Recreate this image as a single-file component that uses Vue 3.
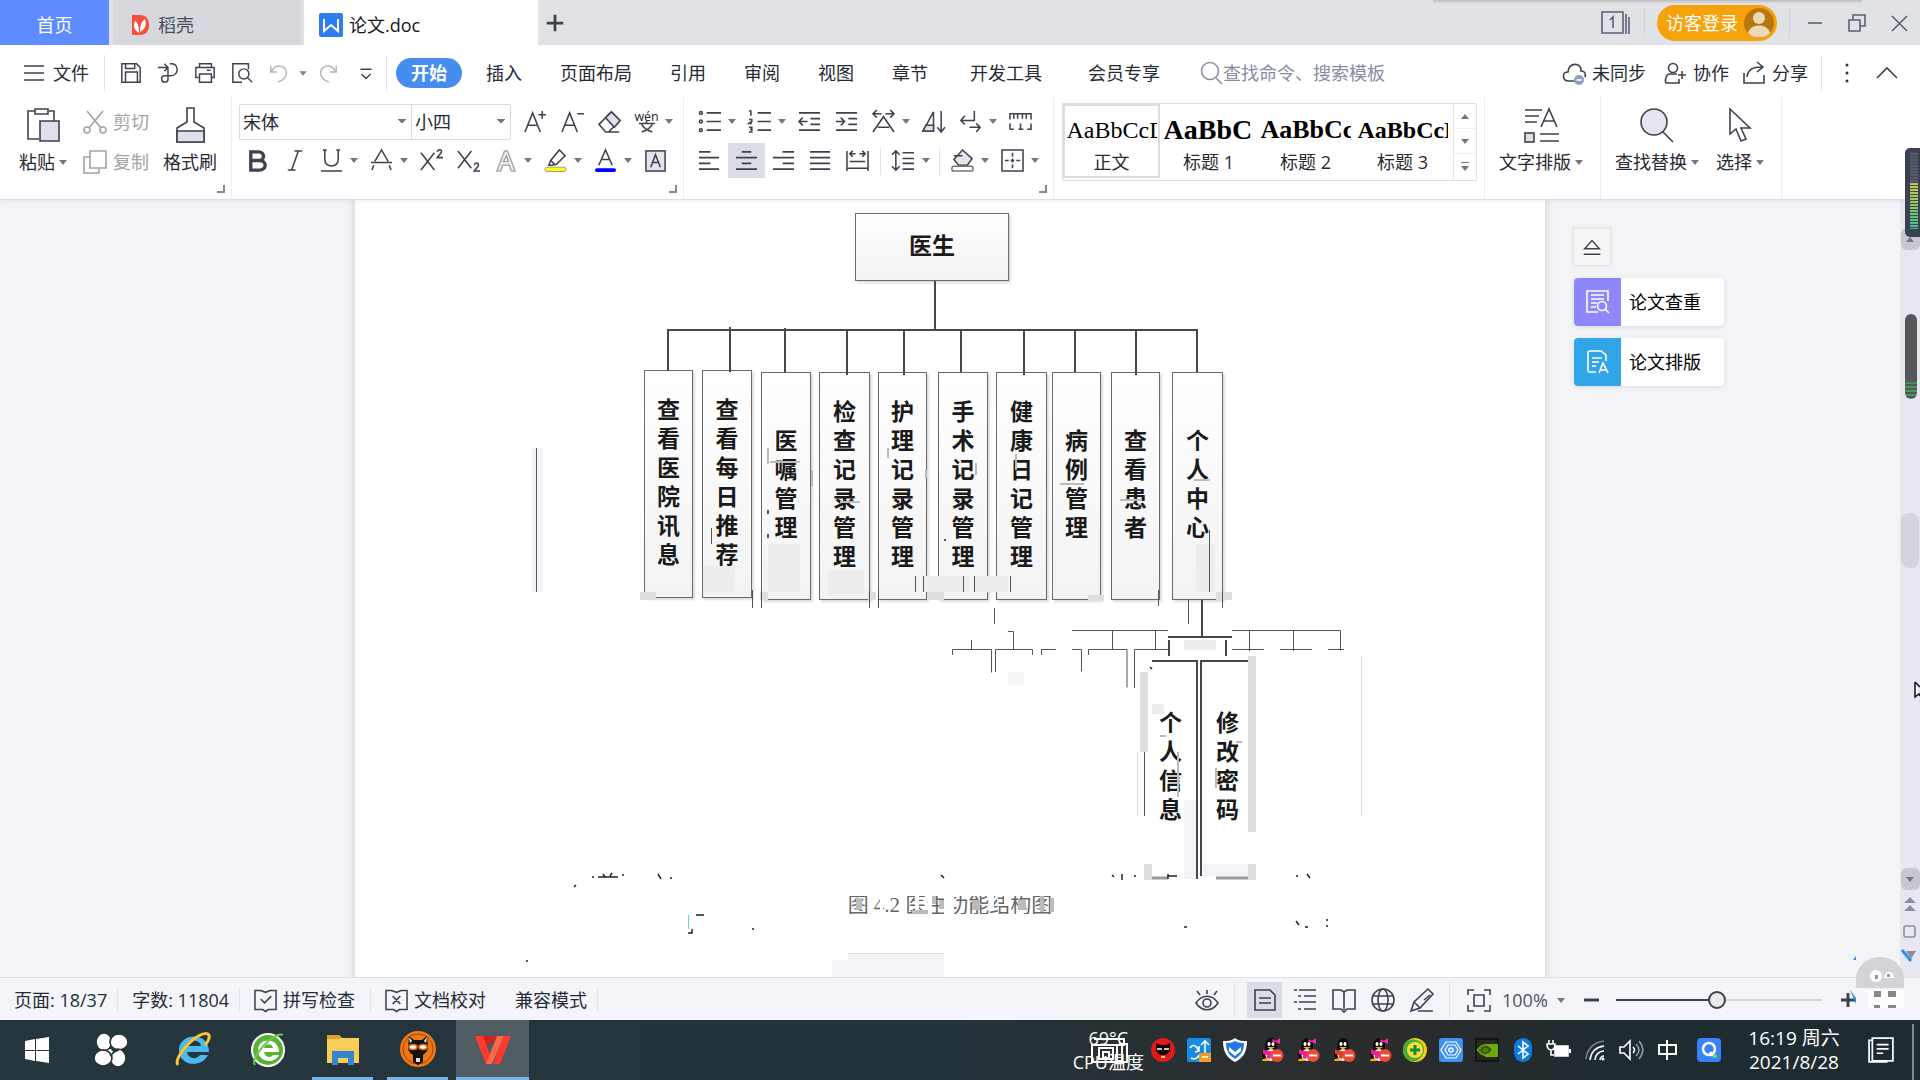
<template>
  <div class="app">
    <header class="titlebar">
      <button class="home-tab">首页</button>
      <button class="doc-tab">
        <Icon name="docer" />
        <span>稻壳</span>
      </button>
      <button class="doc-tab active">
        <Icon name="writer" />
        <span>论文.doc</span>
      </button>
      <button class="new-tab" aria-label="新建"><Icon name="plus" /></button>
      <div class="window-tools">
        <button class="pages" aria-label="标签"><Icon name="pages" box="0 0 30 24" /></button>
        <i class="sep"></i>
        <button class="login">
          <span>访客登录</span>
          <Icon name="avatar" box="0 0 30 30" />
        </button>
        <i class="sep tight"></i>
        <button class="win" aria-label="最小化"><Icon name="min" /></button>
        <button class="win" aria-label="还原"><Icon name="restore" /></button>
        <button class="win" aria-label="关闭"><Icon name="close" /></button>
      </div>
      <div class="top-shadow"></div>
    </header>

    <nav class="menubar">
      <button class="file"><Icon name="menu" />文件</button>
      <i class="sep"></i>
      <div class="quick">
        <button v-for="q in quickTools" :key="q" :aria-label="q" :class="q"><Icon :name="q" /></button>
      </div>
      <i class="sep"></i>
      <button class="tab current">开始</button>
      <button v-for="t in tabs" :key="t" class="tab" :class="{ wide: t.length > 3 && t !== '页面布局' }">{{ t }}</button>
      <label class="search">
        <Icon name="search" />
        <input type="text" aria-label="查找命令、搜索模板" placeholder="查找命令、搜索模板" />
      </label>
      <div class="share">
        <button class="sync"><Icon name="cloud" />未同步</button>
        <button><Icon name="team" />协作</button>
        <button><Icon name="share" />分享</button>
        <i class="sep"></i>
        <button aria-label="更多"><Icon name="dots" /></button>
        <button aria-label="收起"><Icon name="up" /></button>
      </div>
    </nav>

    <section class="ribbon">
      <div class="group clipboard">
        <button class="big"><Icon name="paste" box="0 0 36 36" /><span>粘贴<i class="caret"></i></span></button>
        <div class="stack">
          <button class="muted"><Icon name="cut" />剪切</button>
          <button class="muted"><Icon name="copy" />复制</button>
        </div>
        <button class="big"><Icon name="brush" box="0 0 36 36" /><span>格式刷</span></button>
        <i class="corner"></i>
      </div>

      <div class="group font">
        <div class="row">
          <div class="combo">
            <select aria-label="字体" class="family"><option>宋体</option></select>
            <select aria-label="字号" class="size"><option>小四</option></select>
          </div>
          <button v-for="t in fontTop" :key="t.icon" class="tool" :class="{ drop: t.drop }" :aria-label="t.icon">
            <Icon :name="t.icon" /><i v-if="t.drop" class="caret"></i>
          </button>
        </div>
        <div class="row">
          <button v-for="t in fontBottom" :key="t.icon" class="tool" :class="{ drop: t.drop }" :aria-label="t.icon">
            <Icon :name="t.icon" /><i v-if="t.drop" class="caret"></i>
          </button>
        </div>
        <i class="corner"></i>
      </div>

      <div class="group para">
        <div class="row">
          <button v-for="t in paraTop" :key="t.icon" class="tool" :class="{ drop: t.drop }" :aria-label="t.icon">
            <Icon :name="t.icon" /><i v-if="t.drop" class="caret"></i>
          </button>
        </div>
        <div class="row">
          <template v-for="t in paraBottom" :key="t.icon">
            <i v-if="t.sep" class="sep"></i>
            <button class="tool" :class="{ drop: t.drop, on: t.on }" :aria-label="t.icon">
              <Icon :name="t.icon" /><i v-if="t.drop" class="caret"></i>
            </button>
          </template>
        </div>
        <i class="corner"></i>
      </div>

      <div class="group styles">
        <div class="gallery">
          <button v-for="s in styles" :key="s.name" class="style" :class="s.kind">
            <span class="sample">{{ s.sample }}</span>
            <span>{{ s.name }}</span>
          </button>
          <div class="spin">
            <button aria-label="上一行"><i class="caret flip"></i></button>
            <button aria-label="下一行"><i class="caret"></i></button>
            <button aria-label="展开"><i class="bar"></i><i class="caret"></i></button>
          </div>
        </div>
      </div>

      <div class="group edit">
        <button class="big"><Icon name="typeset" box="0 0 36 36" /><span>文字排版<i class="caret"></i></span></button>
      </div>
      <div class="group edit">
        <button class="big"><Icon name="find" box="0 0 36 36" /><span>查找替换<i class="caret"></i></span></button>
        <button class="big"><Icon name="pick" box="0 0 36 36" /><span>选择<i class="caret"></i></span></button>
      </div>
    </section>

    <main class="workspace">
      <article class="page">
        <div class="canvas">
          <div
            v-for="n in nodes"
            :key="n.text + n.x"
            class="node"
            :class="n.kind"
            :style="{ left: n.x - 355 + 'px', top: n.y - 200 + 'px', width: n.w + 'px', height: n.h + 'px' }"
          >
            <span>{{ n.text }}</span>
          </div>
          <p class="caption">图 4.2 医生功能结构图</p>
          <svg class="lines" viewBox="355 200 1190 777" width="1190" height="777">
            <g fill="#dedede">
              <path d="M1140 672h8v80h-8zM1248 656h8v176h-8zM1144 864h8v16h-8zM1248 864h8v16h-8zM640 592h16v8h-16zM760 592h8v8h-8zM868 592h8v8h-8zM928 592h16v8h-16zM1088 595h16v6h-16zM1216 592h16v8h-16z" />
              <path fill="#ededed" d="M703 566h32v26h-32zM768 544h32v48h-32zM828 570h36v24h-36zM923 576h46v16h-46zM974 576h34v16h-34zM1196 544h19v48h-19zM1152 704h12v10h-12zM1184 640h32v10h-32z" />
              <path fill="#f7f7f7" d="M1008 672h16v14h-16z" />
              <path fill="#f3f4f8" d="M1184 800h14v79h-14zM1203 864h45v12h-45zM532 448h11v144h-11z" />
            </g>
            <path fill="none" stroke="#484848" stroke-width="2" d="M935 281v49M668 371v-41h529v42M730 327v45M785 328v45M847 330v45M904 330v45M961 330v42M1024 330v45M1075 330v42M1136 330v45M1202 600v38M1168 637h64M1152 661h45v218M1248 661h-47v215M1169 640v16M1226 640v16" />
            <path fill="none" stroke="#555" d="M536.500 448v144M752.500 590v18M761.500 590v18M869.500 590v18M878.500 590v18M1158.500 590v16M1222.500 590v18M1209.500 530v62M994.500 608v16M1188.500 600v24M952.500 655v-5.500h39v23M971.500 640v10M995.500 672v-22.500h37v5.500M1008 631.500h5.500v18M1041.500 655v-5.500h14.500M1072 649.500h9.500v22M1088.500 655v-5.500h38.500v38M1134.500 688v-38.500h34M1072 630.500h96M1112.500 630v20M1155.500 630v20M1232 630.500h108.500v20M1249.500 630v21M1293.500 630v21M1232 649.500h32M1280 649.500h32M1328 649.500h16M1144.500 752v64M915.500 576v16M923.500 576v16M963.500 576v16M974.500 576v16M1010.500 576v16M711.500 528v16" />
            <path stroke="#999" stroke-width="3" d="M1152 878h16M1216 878h32" />
            <path stroke="#ddd" d="M1361.500 656v160M1137.500 752v64" />
            <path stroke="#bbb" stroke-width="2" d="M768 448v16M770 462h30M812 470v16M840 502h20M888 448v10M926 470v8M976 463v12M1016 454v16M1060 484h24M1120 500h22M1194 480h16M1160 736h6M1236 742h6M1216 768v20M1178 752v45" />
            <path fill="none" stroke="#222" stroke-width="1.500" d="M574 887l2-2M592 877h2M598 877h20M603 874l2 3M610 876l2-3M622 875h2M658 874l3 5M670 878h2M941 875l3 3M1112 875l2 2M1122 874v6M1134 876h2M1168 874v5M1168 876h9M1296 876h2M1307 874l3 4M688 933h4v-4M696 915h8M752 929h2M526 961h2M1184 927h3M1296 921l3 4M1305 927h3M1327 919v2M1327 925v2M768 534v4M768 510v4M1150 667l2 2M944 540h2" />
            <path stroke="#6bd6bd" d="M688.500 915v14" />
            <path fill="#fff" d="M840 892h220v4h-220zM840 914h220v8h-220zM880 896h3v18h-3zM899 896h8v18h-8zM915 896h4v18h-4zM928 896h4v18h-4zM944 896h10v18h-10zM990 896h4v14h-4zM1004 896h5v10h-5z" />
            <path fill="#bbb" d="M856 898h6v12h-6zM912 910h16v4h-16zM932 896h4v8h-4zM939 900h5v9h-5zM972 900h8v10h-8zM1018 900h8v10h-8zM1040 896h4v16h-4zM1050 898h4v14h-4z" />
            <path fill="#f3f4f8" d="M848 953h96v24h-112v-17h16z" />
            <path stroke="#dfe1e8" d="M848 953.500h96" />
          </svg>
        </div>
      </article>

      <aside class="side">
        <button class="eject" aria-label="收起"><Icon name="eject" /></button>
        <button class="card check"><span class="mark"><Icon name="check" /></span>论文查重</button>
        <button class="card format"><span class="mark"><Icon name="format" /></span>论文排版</button>
      </aside>

      <div class="scrollbar">
        <button class="step" aria-label="向上"><i class="caret flip"></i></button>
        <div class="thumb"></div>
        <button class="step" aria-label="向下"><i class="caret"></i></button>
        <Icon name="prevPage" />
        <Icon name="object" />
        <Icon name="nextPage" />
      </div>

      <div class="meter tall"></div>
      <div class="meter short"></div>
      <svg class="pointer" viewBox="0 0 6 18"><path d="M1 1v15l4-3 1 2M1 1l5 5" fill="#fff" stroke="#111" stroke-width="1.500" /></svg>
    </main>

    <footer class="statusbar">
      <span class="cell">页面: 18/37</span>
      <span class="cell">字数: 11804</span>
      <button class="cell"><Icon name="spell" />拼写检查</button>
      <button class="cell plain"><Icon name="proof" />文档校对</button>
      <span class="cell">兼容模式</span>
      <div class="views">
        <button aria-label="护眼"><Icon name="eye" /></button>
        <i class="sep"></i>
        <button v-for="v in views" :key="v" :class="{ on: v === 'pageView' }" :aria-label="v"><Icon :name="v" /></button>
        <i class="sep"></i>
        <button class="fit" aria-label="适合页面"><Icon name="fit" /></button>
        <label class="zoom">
          <select aria-label="显示比例"><option>100%</option></select>
          <i class="caret"></i>
        </label>
        <button class="minus" aria-label="缩小"><Icon name="minus" /></button>
        <input v-model="zoom" class="slider" type="range" min="0" max="100" aria-label="缩放" />
        <button class="more" aria-label="放大"><Icon name="more" /></button>
      </div>
      <svg class="mascot" viewBox="0 0 54 54">
        <path d="M6 32v-8a24 22 0 0 1 48-2v10z" fill="#d3d4d9" />
        <path d="M6 34h48v18H18V36z" fill="#fff" opacity=".8" />
        <path d="M6 0v4L3 4zM0 34l6 14v-6z" fill="#3d86d8" />
        <g fill="#fff"><circle cx="26" cy="20" r="6" /><path d="M34 22a5 6 0 0 1 10 0z" /></g>
        <path d="M25 19h3v4h-3zM37 18h3v3h-3z" fill="#999" />
        <path d="M24 35h7v6h-7zM38 35h8v6h-8zM24 49h6v3h-6zM38 49h8v3h-8z" fill="#888" />
      </svg>
    </footer>

    <div class="taskbar">
      <button class="start" aria-label="开始"><Icon name="windows" box="0 0 36 36" /></button>
      <button class="start" aria-label="clover"><Icon name="clover" box="0 0 36 36" /></button>
      <div class="apps">
        <button v-for="a in apps" :key="a.icon" :class="{ running: a.running, focus: a.focus }" :aria-label="a.icon">
          <Icon :name="a.icon" box="0 0 36 36" />
        </button>
      </div>
      <div class="tray">
        <div class="temp">
          <span>69°C</span>
          <span>CPU温度</span>
          <svg class="ghost" viewBox="0 0 38 26" fill="none" stroke="#fff" stroke-width="2">
            <path d="M3 1h30v6H1v17h24M8 10h14v11H8zM12 14h6v6h-6zM26 8v16h10V6h-8M31 6v18" />
          </svg>
        </div>
        <Icon v-for="(t, i) in tray" :key="i" :name="t" />
        <div class="clock"><span>16:19 周六</span><span>2021/8/28</span></div>
        <button class="notify" aria-label="通知"><Icon name="notice" /></button>
        <i class="desktop"></i>
      </div>
    </div>
  </div>
</template>

<script setup>
import { h, ref } from "vue";

const zoom = ref(49);

const penguin = (bow) =>
  `<g stroke="none"><path d="M4 19c-2-2 0-6 2-8C6 4 8 0 12 0s6 4 6 11c2 2 4 6 2 8l-3 4H7z" fill="#0b0b0d"/><ellipse cx="12" cy="17" rx="5.500" ry="6" fill="#fff"/><path d="M4 11c5 3 11 3 16 0l1 4c-3 2-6 3-9 3l-1 3-3-1v-3l-4-1z" fill="${bow ? "#f019a0" : "#e23a2e"}"/><ellipse cx="10" cy="6" rx="1.500" ry="2" fill="#fff"/><ellipse cx="14" cy="6" rx="1.500" ry="2" fill="#fff"/><path d="M8 9h8l-4 2.500zM3 23c0-2 3-3 6-2l1 2z" fill="#ffb000"/>${bow ? '<path d="M13 1l4 2 4-3v6l-4-2-3 1z" fill="#ff2aa8"/>' : ""}<circle cx="18" cy="17.500" r="6.500" fill="#ee4a38"/><path d="M14 16.500h8v2h-8z" fill="#fff"/></g>`;

const icons = {
  docer: '<g stroke="none"><path d="M4 2h8c6 0 9 4 9 10s-3 10-9 10H4z" fill="#f5513e"/><path d="M11 20c-5-3-6-7-4-12 3 2 4 5 4 12zM12 19c0-6 1-10 5-13 2 6 0 10-5 13z" fill="#fff"/></g>',
  writer: '<rect width="24" height="24" rx="2" fill="#2f7cf0" stroke="none"/><path d="M5 6v12l7-6 7 6V6" stroke="#fff" stroke-width="2"/>',
  plus: '<path d="M12 3v18M3 12h18" stroke-width="3"/>',
  pages: '<path d="M1 1h21v21H1zM25 3v20M28 6v17"/><path d="M9 9l3-3v11"/>',
  avatar: '<circle cx="15" cy="15" r="15" fill="#b9770f" stroke="none"/><circle cx="15" cy="10" r="6" fill="#ecd9b5" stroke="none"/><path d="M4 25c2-10 20-10 22 0-5 6-17 6-22 0z" fill="#ecd9b5" stroke="none"/>',
  min: '<path d="M5 12h14"/>',
  restore: '<path d="M4 9h11v11H4zM8 9V4h12v11h-5"/>',
  close: '<path d="M5 5l15 15M20 5L5 20"/>',
  menu: '<path d="M2 5h20M2 12h20M2 19h20"/>',
  save: '<path d="M2 2h16l4 4v16H2zM6 22V11h13v11M6 2v5h10V2"/>',
  exportTo: '<path d="M1 6h10M8 2l4 4-4 4M14 2c10-2 11 13 1 13h-3v3a3.500 3.500 0 1 1-4-3h4V7"/>',
  print: '<path d="M6 6V2h13v4M5 17H2V6h20v11h-3M6 13h13v9H6zM14 9h4"/>',
  preview: '<path d="M12 22H2V2h17v6"/><circle cx="14" cy="13" r="5.500"/><path d="M18 17l5 5"/>',
  undo: '<g stroke="#b5b7bd"><path d="M3 4v7h7M4 10c5-9 16-6 16 2 0 5-4 8-9 10"/></g>',
  undoMore: '<path d="M8 10h8l-4 5z" fill="#888" stroke="none"/>',
  redo: '<g stroke="#b5b7bd"><path d="M21 4v7h-7M20 10C15 1 4 4 4 12c0 5 4 8 9 10"/></g>',
  chevron: '<path d="M6 8h12M7 13l5 5 5-5"/>',
  search: '<g stroke="#8b90a3"><circle cx="11" cy="10" r="8.500"/><path d="M17 17l6 6"/></g>',
  cloud: '<path d="M13 20H6C0 19 0 11 6 11 6 1 20 1 19 10c4 0 5 3 4 6"/><circle cx="17" cy="19" r="5" fill="#8fa0bd" stroke="none"/><path d="M14.500 19h5" stroke="#fff"/>',
  team: '<circle cx="10" cy="7" r="4.500"/><path d="M14 13H7c-5 0-5 9-4 9h13v-4M19 10v8M15 14h8"/>',
  share: '<path d="M2 12v10h20v-8M5 16c1-8 6-10 15-10M15 1l6 5-6 5"/>',
  dots: '<g fill="#333" stroke="none"><circle cx="12" cy="4" r="1.500"/><circle cx="12" cy="12" r="1.500"/><circle cx="12" cy="20" r="1.500"/></g>',
  up: '<path d="M2 17L12 7l10 10"/>',
  paste: '<path d="M10 4H3v28h11M24 4h5v10M10 2h13v5H10z"/><path d="M15 14h19v20H15z" fill="#dfe0e9"/>',
  cut: '<g stroke="#a3a3a3"><path d="M4 1l14 17M20 1L6 18"/><circle cx="4" cy="20" r="3"/><circle cx="20" cy="20" r="3"/></g>',
  copy: '<g stroke="#a3a3a3"><path d="M7 7H1v16h15v-5M7 1h16v17H7z"/></g>',
  brush: '<path d="M15 15V1h7v14l10 6v14H5V21z"/><path d="M5 24h27v11H5z" fill="#dfe0e9"/>',
  grow: '<path d="M1 23L9 3l8 20M4 16h10M19 1v8M15 5h8"/>',
  shrink: '<path d="M1 23L9 3l8 20M4 16h10M17 4h7"/>',
  eraser: '<path d="M1 15L14 2l9 9-12 12H8zM8 23h14"/><path d="M8 8l6-6 9 9-6 7z" fill="#dfe0e9"/>',
  wen: '<text x="12" y="11" text-anchor="middle" font-size="13" stroke="none" fill="#222" font-family="Open Sans">wén</text><path d="M4 14h17M12 11v3M7 15c2 4 5 6 11 8M18 15c-2 4-5 6-11 8"/>',
  bold: '<path d="M5 3h8c7 0 7 9 0 9H5zM5 12h9c8 0 8 10 0 10H5z" stroke-width="3.500"/>',
  italic: '<path d="M12 2h8M5 22h8M16 2L9 22"/>',
  underline: '<path d="M3 1h4M17 1h4M5 1v10c0 9 14 9 14 0V1M1 23h22"/>',
  strike: '<path d="M5 13l7-12 7 12M1 14h22M4 17l-2 5M20 17l2 5"/>',
  sup: '<path d="M1 4l14 18M15 4L1 22M18 3c1-4 6-2 4 1l-4 5h6"/>',
  sub: '<path d="M1 2l14 18M15 2L1 20M18 17c1-4 6-2 4 1l-4 5h6"/>',
  outlineA: '<path d="M3 23L11 2h3l8 21h-4l-2-6H9l-2 6zM10 13h5l-2-6z" stroke="#aaa" fill="#f0f0f3"/>',
  marker: '<path d="M5 17l2-5 9-11 6 6-9 9-5 1zM7 12l5 5"/><rect x="1" y="19" width="22" height="4.500" rx="2" fill="#ff0" stroke="#999" stroke-width="1"/>',
  fontColor: '<path d="M5 17l7-16 7 16M8 11h8"/><rect x="1" y="20" width="22" height="4" rx="2" fill="#00f" stroke="none"/>',
  boxedA: '<rect x="2" y="2" width="20" height="21" fill="#e4e5ec"/><path d="M7 19l5-13 5 13M9 14h6"/>',
  bullets: '<circle cx="3" cy="3" r="1.500"/><circle cx="3" cy="12" r="1.500"/><circle cx="3" cy="21" r="1.500"/><path d="M9 3h15M9 12h15M9 21h15"/>',
  numbers: '<path d="M1 1h2v5M1 10h3v2l-3 2h3M1 18h3v5H1M2 20h2M10 3h14M10 12h14M10 21h14"/>',
  outdent: '<path d="M1 3h22M13 9h10M13 15h10M1 21h22M1 12h9M5 8l-4 4 4 4"/>',
  indent: '<path d="M1 3h22M14 9h9M14 15h9M1 21h22M1 12h8M6 8l4 4-4 4"/>',
  scaleA: '<path d="M1 4h9M5 0L1 4l4 4M23 4h-9M19 0l4 4-4 4M1 23L12 7l11 16M6 18h12"/>',
  sort: '<path d="M1 22L12 2v20z"/><path d="M4 16h8v6H1z" fill="#dfe0e9"/><path d="M20 1v21M16 18l4 5 4-5"/>',
  wrap: '<path d="M16 1v10H2M6 6l-4 5 4 4M11 18h11M18 14l4 4-4 5"/>',
  ruler: '<path d="M1 10V4h22v6M5 4v5M9 4v5M14 4v5M18 4v5M1 14v6M1 20h4M10 20h5M12 14v6M19 20h4v-6"/>',
  left: '<path d="M1 3h12M1 9h21M1 15h12M1 21h21"/>',
  center: '<path d="M7 3h10M1 9h22M7 15h10M1 21h22"/>',
  right: '<path d="M11 3h12M1 9h22M11 15h12M1 21h22"/>',
  justify: '<path d="M1 3h21M1 9h21M1 15h21M1 21h21"/>',
  spread: '<path d="M1 2v21M23 2v21M5 5h5M7 2L4 5l3 3M19 5h-5M17 2l3 3-3 3M4 13h16M1 20h22"/>',
  spacing: '<path d="M4 2v20M0 6l4-4 4 4M0 18l4 4 4-4M11 4h12M11 10h12M11 15h12M11 21h12"/>',
  fill: '<path d="M3 11L12 1l10 9-5 7H8zM3 7h9" fill="#e4e5ec"/><rect x="1" y="18" width="22" height="5" rx="2" fill="#fff" stroke="#777"/>',
  border: '<path d="M1 1h22v22H1z"/><path d="M12 4v16M4 12h16" stroke-dasharray="4 2"/>',
  typeset: '<path d="M2 3h17M2 9h14M2 15h12M18 20l8-18 8 18M21 14h10M17 27h19M17 34h19"/><rect x="2" y="26" width="9" height="9" fill="#dfe0e9"/>',
  find: '<circle cx="15" cy="15" r="13" fill="#e6e7ee"/><path d="M24 25l10 10"/>',
  pick: '<path d="M8 2v25l6-5 5 12 5-2-5-11h9z"/>',
  eject: '<path d="M4 14L12 5l8 9zM3 20h18"/>',
  check: '<path d="M12 22H1V1h21v10M5 5h13M5 9h13M5 13h6M5 17h5"/><circle cx="16" cy="16" r="4.500"/><path d="M19 19l4 4"/>',
  format: '<path d="M10 22H4c-2 0-2-1-2-3V3c0-1 0-2 2-2h11l5 4v6M6 8h10M6 12h7M6 16h4M13 23l4-10 5 10M15 20h5"/>',
  prevPage: '<path d="M6 10l6-6 6 6zM6 18l6-6 6 6z" fill="#8d8e9d" stroke="none"/>',
  object: '<rect x="6" y="6" width="11" height="11" rx="2" stroke="#8d8e9d"/>',
  nextPage: '<path d="M8 4h10l-5 8z" fill="#8d8e9d" stroke="none"/><path d="M4 3l9 11" stroke="#2d8ff0" stroke-width="3"/>',
  spell: '<path d="M9 22H1V2h6l5 2 5-2h6v20h-8l-3 2zM7 11l4 4 7-7"/>',
  proof: '<path d="M9 22H1V2h6l5 2 5-2h6v20h-8l-3 2zM8 8l8 8M16 8l-8 8"/>',
  eye: '<path d="M1 15c6-9 16-9 22 0-6 9-16 9-22 0z"/><circle cx="12" cy="15" r="4"/><path d="M12 2v4M2 3l3 4M22 3l-3 4"/>',
  pageView: '<path d="M2 2h15l5 5v15H2zM6 10h12M6 15h12"/>',
  outline: '<path d="M1 2h3M6 2h17M5 8h3M11 8h12M1 14h3M6 14h17M5 21h3M11 21h12"/>',
  reading: '<path d="M1 2h8l3 2 3-2h8v19h-8l-3 3-3-3H1zM12 4v18"/>',
  web: '<circle cx="12" cy="12" r="11"/><ellipse cx="12" cy="12" rx="5" ry="11"/><path d="M2 8h20M2 16h20"/>',
  pen: '<path d="M1 23l3-9L18 1l5 5-13 14zM4 14l6 6M8 23h15M14 12l6-5"/>',
  fit: '<path d="M1 7V2h6M17 2h6v5M23 17v6h-6M7 23H1v-6M7 7h10v11H7z"/>',
  minus: '<path d="M5 12h15" stroke-width="3"/>',
  more: '<path d="M5 12h14M12 5v14" stroke-width="3"/>',
  windows: '<path d="M6 9l10-2v11H6zM17 7l13-2v13H17zM6 19h10v10L6 27zM17 19h13v12l-13-2z" fill="#fff" stroke="none"/>',
  clover: '<g fill="#fff" stroke="#24343c"><ellipse cx="11" cy="10" rx="8" ry="9"/><ellipse cx="26" cy="10" rx="9" ry="8"/><ellipse cx="25" cy="26" rx="8" ry="9"/><ellipse cx="10" cy="26" rx="9" ry="8"/><path d="M10 18c4 1 6 0 8-4 0 4 2 6 8 4-4 1-7 2-8 6-1-5-4-6-8-6z"/></g>',
  ie: '<path d="M34 21H12c1 7 10 8 13 3h8C26 38 3 35 4 18 5 2 34 0 34 21zM26 15c-1-7-13-7-14 0z" fill="#4bb9ee" stroke="none"/><path d="M3 34C-3 27 24-2 33 3c3 2 0 8-3 11" stroke="#f6c62d" stroke-width="3"/>',
  browser: '<circle cx="18" cy="19" r="16" fill="#54b431" stroke="#fff" stroke-width="2"/><path d="M29 21H14c1 6 7 6 9 3h6c-5 10-21 7-21-5 0-13 21-13 21 2zm-6-4c-1-5-8-5-9 0z" fill="#fff" stroke="none"/><path d="M5 34C-1 27 25-1 33 4" stroke="#6cc94a" stroke-width="2"/>',
  folder: '<path d="M2 4h12l3 3h17v25H2z" fill="#f8cd57" stroke="none"/><path d="M2 4h12l2 4H2z" fill="#dca12d" stroke="none"/><path d="M7 34V20h22v14h-6v-7H13v7z" fill="#3288cf" stroke="none"/>',
  catApp: '<circle cx="18" cy="18" r="18" fill="#f07812" stroke="none"/><circle cx="18" cy="18" r="15" stroke="#a83d0d" stroke-width="1"/><path d="M9 5l5 4h8l5-4 1 12c-1 4-4 6-5 7v7l-5 3-5-3v-7c-2-1-5-4-5-7z" fill="#161210" stroke="none"/><path d="M9 6l3 4-2 2zM27 6l-3 4 2 2z" fill="#fff" stroke="none"/><ellipse cx="13" cy="16" rx="4" ry="2.500" fill="#fff" stroke="#e36b18"/><ellipse cx="23" cy="16" rx="4" ry="2.500" fill="#fff" stroke="#e36b18"/><path d="M16 27h4v4h-4z" fill="#ddd" stroke="none"/>',
  wps: '<path d="M0 5h8l6 16 3 12h-6z" fill="#ff3b30" stroke="none"/><path d="M8 5h13l-3 7h-6l2 9z" fill="#d91f1f" stroke="none"/><path d="M11 33L22 5h7L17 33z" fill="#ff6a45" stroke="none"/><path d="M19 33h6L36 5h-7l-8 20z" fill="#ff3b30" stroke="none"/>',
  catTray: '<circle cx="12" cy="12" r="12" fill="#e01919" stroke="none"/><path d="M5 5l5 2h5l4-2v8l-4 4h-6l-4-4z" fill="#160808" stroke="none"/><path d="M6 11h5M13 11h5" stroke="#fff"/><path d="M10 19h4" stroke="#ddd"/>',
  syncTray: '<rect width="24" height="24" rx="2" fill="#168be5" stroke="none"/><path d="M3 10c4-6 8 0 8 3M8 14l4-1V8M18 3v12M14 7l4-4 4 4M4 20c4 2 7 0 8-3" stroke="#fff"/><path d="M12 15h12v9H12z" fill="#f39b22" stroke="none"/><path d="M15 19h6" stroke="#fff"/>',
  shield: '<path d="M12 0c4 3 7 3 12 3 0 11-4 17-12 21C4 20 0 14 0 3c5 0 8 0 12-3z" fill="#fff" stroke="none"/><path d="M12 3c4 2 6 2 9 2 0 8-3 12-9 16C6 17 3 13 3 5c3 0 5 0 9-2z" fill="#2478dd" stroke="none"/><path d="M6 9l6 5 6-5v4l-6 5-6-5z" fill="#fff" stroke="none"/>',
  qqPink: penguin(true),
  qqRed: penguin(false),
  safe: '<circle cx="12" cy="12" r="12" fill="#f4cc1a" stroke="none"/><path d="M3 4c8-6 18 0 18 7 0 6-4 10-8 12C-1 24-3 10 3 4z" fill="#45ad35" stroke="none"/><circle cx="12" cy="12" r="8" fill="#f9dc37" stroke="none"/><path d="M12 7v10M7 12h10" stroke="#138b35" stroke-width="3"/>',
  hexTray: '<rect width="24" height="24" rx="3" fill="#3f91f3" stroke="none"/><path d="M7 4h10l5 8-5 8H7l-5-8zM9 7h7l3 5-3 5H9l-3-5z" stroke="#fff" stroke-width="1.200"/><circle cx="12" cy="12" r="2" stroke="#fff"/>',
  nvidia: '<rect x="1" y="1" width="22" height="22" fill="#26291f" stroke="#111"/><path d="M10 6h13v13H10z" fill="#70a90b" stroke="none"/><path d="M2 12c5-7 12-7 16 0-5 7-11 7-16 0z" fill="#4f7d0c" stroke="#83b71e" stroke-width="1"/><path d="M6 12c3-4 7-4 9 0-3 4-6 4-9 0z" stroke="#26380c" stroke-width="1"/>',
  bluetooth: '<rect x="3" width="18" height="24" rx="9" fill="#0e79df" stroke="none"/><path d="M7 8l10 8-5 4V4l5 4-10 8" stroke="#fff"/>',
  battery: '<path d="M2 2v4M6 2v4M0 6h8c0 4-2 6-4 6s-4-2-4-6zM4 12v5h3" stroke="#fff"/><path d="M8 8h13v10H8z" fill="#fff" stroke="#fff"/><path d="M23 11v4" stroke="#fff" stroke-width="2"/>',
  wifi: '<path d="M3 21C4 11 11 4 21 3" stroke="#78848a"/><path d="M7 22c1-8 6-13 14-14M12 22c0-5 4-9 9-9M17 22c0-2 2-4 4-4" stroke="#fff"/><circle cx="20" cy="21" r="1.500" fill="#fff" stroke="none"/>',
  volume: '<path d="M1 9h4l6-6v18l-6-6H1zM14 9c2 2 2 4 0 6" stroke="#fff"/><path d="M17 6c4 4 4 8 0 12M20 3c5 6 5 12 0 18" stroke="#8e999e"/>',
  ime: '<path d="M4 7h17v9H4zM12 2v20" stroke="#fff" stroke-width="2"/>',
  qTray: '<rect width="24" height="24" rx="4" fill="#3b82f8" stroke="none"/><circle cx="12" cy="11" r="6" stroke="#fff" stroke-width="2.500"/><path d="M13 14l3 4" stroke="#fff" stroke-width="2.500"/><circle cx="18" cy="18" r="2" fill="#68e063" stroke="none"/>',
  notice: '<path d="M4 1h19v21H4zM4 3H1v20h17M8 7h11M8 11h11M8 15h6" stroke="#fff"/>',
};

const Icon = (props) =>
  h("svg", { class: "icon", viewBox: props.box || "0 0 24 24", "aria-hidden": "true", innerHTML: icons[props.name] });
Icon.props = ["name", "box"];

const quickTools = ["save", "exportTo", "print", "preview", "undo", "undoMore", "redo", "chevron"];
const tabs = ["插入", "页面布局", "引用", "审阅", "视图", "章节", "开发工具", "会员专享"];

const fontTop = [{ icon: "grow" }, { icon: "shrink" }, { icon: "eraser" }, { icon: "wen", drop: true }];
const fontBottom = [
  { icon: "bold" },
  { icon: "italic" },
  { icon: "underline", drop: true },
  { icon: "strike", drop: true },
  { icon: "sup" },
  { icon: "sub" },
  { icon: "outlineA", drop: true },
  { icon: "marker", drop: true },
  { icon: "fontColor", drop: true },
  { icon: "boxedA" },
];
const paraTop = [
  { icon: "bullets", drop: true },
  { icon: "numbers", drop: true },
  { icon: "outdent" },
  { icon: "indent" },
  { icon: "scaleA", drop: true },
  { icon: "sort" },
  { icon: "wrap", drop: true },
  { icon: "ruler" },
];
const paraBottom = [
  { icon: "left" },
  { icon: "center", on: true },
  { icon: "right" },
  { icon: "justify" },
  { icon: "spread" },
  { icon: "spacing", drop: true, sep: true },
  { icon: "fill", drop: true, sep: true },
  { icon: "border", drop: true },
];

const styles = [
  { name: "正文", sample: "AaBbCcD", kind: "body" },
  { name: "标题 1", sample: "AaBbC", kind: "h1" },
  { name: "标题 2", sample: "AaBbCc", kind: "h2" },
  { name: "标题 3", sample: "AaBbCcD", kind: "h3" },
];

const nodes = [
  { text: "医生", x: 855, y: 213, w: 154, h: 68, kind: "root" },
  { text: "查看医院讯息", x: 644, y: 370, w: 49, h: 228 },
  { text: "查看每日推荐", x: 702, y: 370, w: 50, h: 228 },
  { text: "医嘱管理", x: 761, y: 372, w: 50, h: 228 },
  { text: "检查记录管理", x: 819, y: 372, w: 51, h: 228 },
  { text: "护理记录管理", x: 878, y: 372, w: 49, h: 228 },
  { text: "手术记录管理", x: 938, y: 372, w: 50, h: 228 },
  { text: "健康日记管理", x: 996, y: 372, w: 51, h: 228 },
  { text: "病例管理", x: 1052, y: 372, w: 49, h: 228 },
  { text: "查看患者", x: 1111, y: 372, w: 49, h: 228 },
  { text: "个人中心", x: 1172, y: 372, w: 51, h: 228 },
  { text: "个人信息", x: 1146, y: 661, w: 49, h: 214, kind: "bare" },
  { text: "修改密码", x: 1203, y: 661, w: 49, h: 214, kind: "bare" },
];

const views = ["pageView", "outline", "reading", "web", "pen"];
const apps = [
  { icon: "ie" },
  { icon: "browser" },
  { icon: "folder", running: true },
  { icon: "catApp", running: true },
  { icon: "wps", running: true, focus: true },
];
const tray = [
  "catTray", "syncTray", "shield", "qqPink", "qqPink", "qqRed", "qqPink", "safe",
  "hexTray", "nvidia", "bluetooth", "battery", "wifi", "volume", "ime", "qTray",
];
</script>

<style>
body {
  margin: 0;
}
</style>

<style scoped>
.app {
  display: flex;
  flex-direction: column;
  height: 100vh;
  overflow: hidden;
  font: 18px/24px "Open Sans", "Noto Sans CJK SC", sans-serif;
  color: #262a33;
  background: #fff;
}

button,
select,
input {
  font: inherit;
  color: inherit;
  border: 0;
  padding: 0;
  margin: 0;
  background: none;
  appearance: none;
  outline: 0;
}

button {
  display: flex;
  align-items: center;
  justify-content: center;
  white-space: nowrap;
}

.icon {
  width: 24px;
  height: 24px;
  flex: none;
  overflow: visible;
  fill: none;
  stroke: #3d424d;
  stroke-width: 1.6;
}

.sep {
  width: 1px;
  height: 36px;
  background: #e3e4e9;
}

.caret {
  display: inline-block;
  border: 4px solid transparent;
  border-top: 5px solid #777;
  border-bottom: 0;
}

.caret.flip {
  transform: rotate(180deg);
}

/* title bar */
.titlebar {
  position: relative;
  display: flex;
  height: 45px;
  flex: none;
  background: #e1e2e6;
}

.home-tab {
  width: 109px;
  margin-right: 4px;
  padding-top: 4px;
  background: #5e8bff;
  color: #fff;
}

.doc-tab {
  width: 188px;
  margin-right: 3px;
  padding: 4px 0 0 15px;
  gap: 6px;
  justify-content: flex-start;
  background: #d7d8dd;
  color: #4a4f5c;
}

.doc-tab.active {
  width: 234px;
  margin: 0;
  background: #fff;
  color: #15171c;
}

.new-tab {
  width: 34px;
}

.new-tab .icon {
  width: 22px;
}

.window-tools {
  display: flex;
  align-items: center;
  margin-left: auto;
}

.window-tools .icon {
  stroke: #5a6078;
}

.window-tools .sep {
  height: 30px;
  margin: 0 12px 0 13px;
  background: #d2d4dc;
}

.window-tools .tight {
  margin: 0 4px 0 12px;
}

.window-tools .pages .icon {
  width: 30px;
}

.login {
  height: 36px;
  padding: 0 3px 0 9px;
  gap: 6px;
  border-radius: 18px;
  background: #f6a30b;
  color: #fff;
}

.login .icon {
  width: 30px;
  height: 30px;
}

.win {
  width: 42px;
}

.top-shadow {
  position: absolute;
  top: 0;
  right: 58px;
  width: 429px;
  height: 3px;
  background: linear-gradient(#b9babd, #dcdde1);
}

/* menu */
.menubar {
  display: flex;
  align-items: center;
  height: 52px;
  flex: none;
  padding: 4px 21px 0 22px;
  box-sizing: border-box;
  white-space: nowrap;
}

.file {
  gap: 7px;
  padding-right: 15px;
}

.quick {
  display: flex;
  align-items: center;
  padding-left: 7px;
}

.quick button {
  width: 37px;
}

.quick .undoMore {
  width: 12px;
}

.quick .chevron {
  width: 40px;
}

.quick .icon {
  width: 22px;
  height: 22px;
}

.tab {
  padding: 0 19px;
}

.tab.wide {
  padding: 0 23px;
}

.tab.current {
  height: 30px;
  margin: 0 5px 0 9px;
  padding: 0 15px;
  border-radius: 15px;
  background: #478df0;
  color: #fff;
  font-weight: 700;
}

.search {
  display: flex;
  align-items: center;
  margin-left: 16px;
}

.search input {
  width: 180px;
}

.search input::placeholder {
  color: #868ca2;
  opacity: 1;
}

.share {
  display: flex;
  align-items: center;
  margin-left: auto;
  gap: 13px;
}

.share button {
  gap: 6px;
}

.share .sync {
  margin-right: 4px;
}

.share button + .sep + button {
  margin-right: 3px;
}

/* ribbon */
.ribbon {
  position: relative;
  z-index: 1;
  display: flex;
  height: 103px;
  flex: none;
  box-sizing: border-box;
  border-bottom: 1px solid #dedfe3;
  box-shadow: 0 2px 4px #0000000d;
}

.group {
  position: relative;
  padding: 5px 7px 0 7px;
  border-right: 1px solid #ebecf0;
}

.clipboard {
  display: flex;
  padding: 5px 14px 0 19px;
}

.font {
  padding-right: 5px;
}

.para {
  padding-right: 9px;
}

.big {
  flex-direction: column;
  justify-content: flex-start;
  padding-top: 5px;
}

.big .icon {
  width: 36px;
  height: 36px;
}

.big span {
  display: flex;
  align-items: center;
  gap: 4px;
  height: 24px;
  margin-top: 7px;
}

.stack {
  display: flex;
  flex-direction: column;
  padding: 0 14px 0 16px;
}

.stack button {
  height: 40px;
  gap: 6px;
  color: #a3a3a3;
}

.corner {
  position: absolute;
  right: 6px;
  bottom: 6px;
  width: 6px;
  height: 6px;
  border: solid #888;
  border-width: 0 2px 2px 0;
}

.row {
  display: flex;
  align-items: center;
  height: 39px;
}

.row .sep {
  margin: 0 4px;
  height: 28px;
}

.combo {
  display: flex;
  width: 270px;
  height: 34px;
  margin-right: 6px;
  border: 1px solid #d9dbe1;
  border-radius: 2px;
}

.combo select {
  padding-left: 3px;
  background: conic-gradient(from -39deg at 50% 100%, #777 78deg, transparent 0) right 5px center / 8px 5px no-repeat;
}

.family {
  flex: 1;
  border-right: 1px solid #d9dbe1;
}

.size {
  width: 98px;
}

.tool {
  width: 37px;
  height: 35px;
}

.tool.drop {
  width: 50px;
  gap: 7px;
  padding-left: 1px;
}

.tool.on {
  background: #dadde6;
}

.tool .icon {
  width: 23px;
  height: 23px;
}

.styles {
  padding: 6px 7px 0 8px;
}

.gallery {
  display: flex;
  height: 76px;
  border: 1px solid #dddfe4;
}

.style {
  flex-direction: column;
  justify-content: flex-start;
  width: 97px;
  height: 74px;
  box-sizing: border-box;
  padding: 0 2px;
  overflow: hidden;
  border: 2px solid transparent;
}

.style.body {
  border-color: #dcdde2;
}

.sample {
  width: 90px;
  height: 44px;
  overflow: hidden;
  font: 700 24px/48px "Liberation Serif", serif;
  text-align: left;
  color: #000;
}

.body .sample {
  font-weight: 400;
}

.h1 .sample {
  font-size: 28px;
}

.h2 .sample {
  font-size: 26px;
}

.spin {
  width: 22px;
  margin-left: 2px;
  border-left: 1px solid #e6e7eb;
}

.spin button {
  width: 22px;
  height: 25px;
  flex-direction: column;
  gap: 3px;
  border-bottom: 1px solid #eeeff2;
  box-sizing: border-box;
}

.spin button:last-child {
  border: 0;
}

.bar {
  width: 8px;
  height: 1px;
  background: #777;
}

.edit {
  display: flex;
  gap: 17px;
  padding: 5px 17px 0 14px;
}

/* document area */
.workspace {
  position: relative;
  display: grid;
  grid-template-columns: 1fr minmax(0, 1190px) 1fr 20px;
  flex: 1;
  min-height: 0;
  background: #f3f4f8;
}

.page {
  grid-column: 2;
  position: relative;
  background: #fff;
  box-shadow: 0 0 6px 3px #dedee2;
  clip-path: inset(0 -10px);
}

.canvas {
  position: absolute;
  inset: 0;
  overflow: hidden;
}

.lines {
  position: absolute;
  left: 0;
  top: 0;
}

.node {
  position: absolute;
  display: flex;
  align-items: center;
  justify-content: center;
  box-sizing: border-box;
  border: 1px solid #6a6a6a;
  background: linear-gradient(#fff, #f3f3f3);
  box-shadow: 2px 2px 2px #ddd;
  font: 700 23px/29px "Noto Sans CJK SC", sans-serif;
  color: #1a1a1a;
}

.node span {
  width: 23px;
  padding-bottom: 6px;
}

.node.root span {
  width: auto;
}

.node.bare {
  border: 0;
  background: none;
  box-shadow: none;
}

.caption {
  position: absolute;
  left: 0;
  right: 0;
  top: 693px;
  margin: 0;
  text-align: center;
  font: 21px/24px "Liberation Serif", "Noto Sans CJK SC", serif;
  color: #666;
}

.side {
  grid-column: 3;
  padding: 29px 0 0 29px;
}

.eject {
  width: 36px;
  height: 36px;
  margin-bottom: 13px;
  background: #f6f6f7;
  box-shadow: 0 0 3px 1px #dcdcde;
}

.eject .icon {
  width: 22px;
}

.card {
  width: 150px;
  height: 48px;
  margin-bottom: 12px;
  gap: 8px;
  justify-content: flex-start;
  border-radius: 4px;
  background: #fff;
  box-shadow: 0 1px 4px #d8d9de;
  color: #000;
}

.mark {
  display: flex;
  align-items: center;
  justify-content: center;
  width: 47px;
  height: 48px;
  border-radius: 4px 0 0 4px;
  background: #8e87fb;
}

.format .mark {
  background: #31a5e7;
}

.mark .icon {
  stroke: #fff;
}

.scrollbar {
  grid-column: 4;
  display: flex;
  flex-direction: column;
  align-items: center;
  padding: 28px 0 3px;
  background: #e7e7f1;
}

.scrollbar .icon {
  margin-bottom: 3px;
}

.step {
  width: 19px;
  height: 22px;
  border-radius: 6px;
  background: #c6c7d1;
}

.thumb {
  width: 18px;
  height: 55px;
  margin: 263px 0 auto;
  border-radius: 8px;
  background: #d3d4de;
}

.step + .icon {
  margin-top: 3px;
}

.meter {
  position: absolute;
  z-index: 2;
  box-sizing: border-box;
}

.meter.tall {
  top: -52px;
  right: 0;
  width: 15px;
  height: 89px;
  border: 2px solid #3b4150;
  border-width: 4px 2px 8px 5px;
  border-radius: 5px 0 0 5px;
  background: repeating-linear-gradient(#454b5a 0 1px, transparent 1px 3px),
    linear-gradient(#555b6c 40%, #c5cf4e 41%, #8fc75b 68%, #3bbb94);
}

.meter.short {
  top: 114px;
  right: 3px;
  width: 12px;
  height: 85px;
  border-radius: 6px;
  background: repeating-linear-gradient(transparent 0 2px, #57575b 2px 4px),
    linear-gradient(#57575b 80%, #3f9a57 81%);
}

.pointer {
  position: absolute;
  top: 481px;
  right: 0;
  width: 6px;
  height: 18px;
}

/* status bar */
.statusbar {
  position: relative;
  display: flex;
  align-items: center;
  height: 43px;
  flex: none;
  box-sizing: border-box;
  border-top: 1px solid #dfe1e8;
  background: #f4f5fa;
  padding: 2px 62px 0 0;
  white-space: nowrap;
}

.cell {
  display: flex;
  align-items: center;
  gap: 6px;
  padding: 0 10px 0 14px;
  border-right: 1px solid #e2e4ea;
}

.cell .icon {
  width: 23px;
}

button.cell {
  padding-right: 15px;
}

.cell.plain {
  border: 0;
}

.views {
  display: flex;
  align-items: center;
  margin-left: auto;
}

.views button {
  width: 39px;
  height: 36px;
}

.views button.on {
  width: 35px;
  margin-right: 3px;
  background: #d9dce5;
}

.views .sep {
  margin: 0 12px 0 8px;
}

.views .fit {
  margin-left: -3px;
}

.zoom {
  display: flex;
  align-items: center;
  gap: 9px;
  margin-left: 4px;
  color: #4e5262;
}

.views .minus {
  margin: 0 6px 0 6px;
}

.slider {
  width: 206px;
  height: 18px;
  background: linear-gradient(90deg, #3d424d 49%, #d6d8de 49%) center / 100% 2px no-repeat;
}

.slider::-webkit-slider-thumb {
  appearance: none;
  width: 18px;
  height: 18px;
  box-sizing: border-box;
  border: 2px solid #3d424d;
  border-radius: 50%;
  background: #e9e9ec;
}

.views .more {
  width: 36px;
  padding-left: 16px;
}

.mascot {
  position: absolute;
  right: 16px;
  bottom: 10px;
  width: 54px;
  height: 54px;
}

/* taskbar */
.taskbar {
  display: flex;
  height: 60px;
  flex: none;
  background: linear-gradient(90deg, #26363e, #25333a 50%, #2b2c2b 72%, #1e2b31 85%);
  color: #fff;
}

.taskbar .start {
  width: 74px;
}

.taskbar button .icon {
  width: 36px;
  height: 36px;
}

.apps {
  display: flex;
  margin-left: 7px;
}

.apps button {
  width: 75px;
  border-bottom: 3px solid transparent;
  background-clip: padding-box;
}

.apps .running {
  width: 61px;
  margin: 0 7px;
  border-bottom-color: #76b5e8;
}

.apps .focus {
  width: 73px;
  margin: 0 1px;
  background: #505b62;
}

.tray {
  display: flex;
  align-items: center;
  gap: 12px;
  margin-left: auto;
}

.temp {
  position: relative;
  display: flex;
  flex-direction: column;
  align-items: center;
  margin-right: -5px;
}

.ghost {
  position: absolute;
  left: 18px;
  top: 12px;
  width: 38px;
  height: 26px;
}

.tray > .icon:last-of-type {
  margin-left: 6px;
}

.clock {
  display: flex;
  flex-direction: column;
  align-items: center;
  width: 98px;
  margin-left: 12px;
  font-size: 19px;
}

.notify {
  margin-left: 13px;
}

.taskbar .notify .icon {
  width: 26px;
  height: 26px;
}

.desktop {
  align-self: stretch;
  width: 2px;
  margin: 4px 6px 0 6px;
  background: #7d878c;
}
</style>
